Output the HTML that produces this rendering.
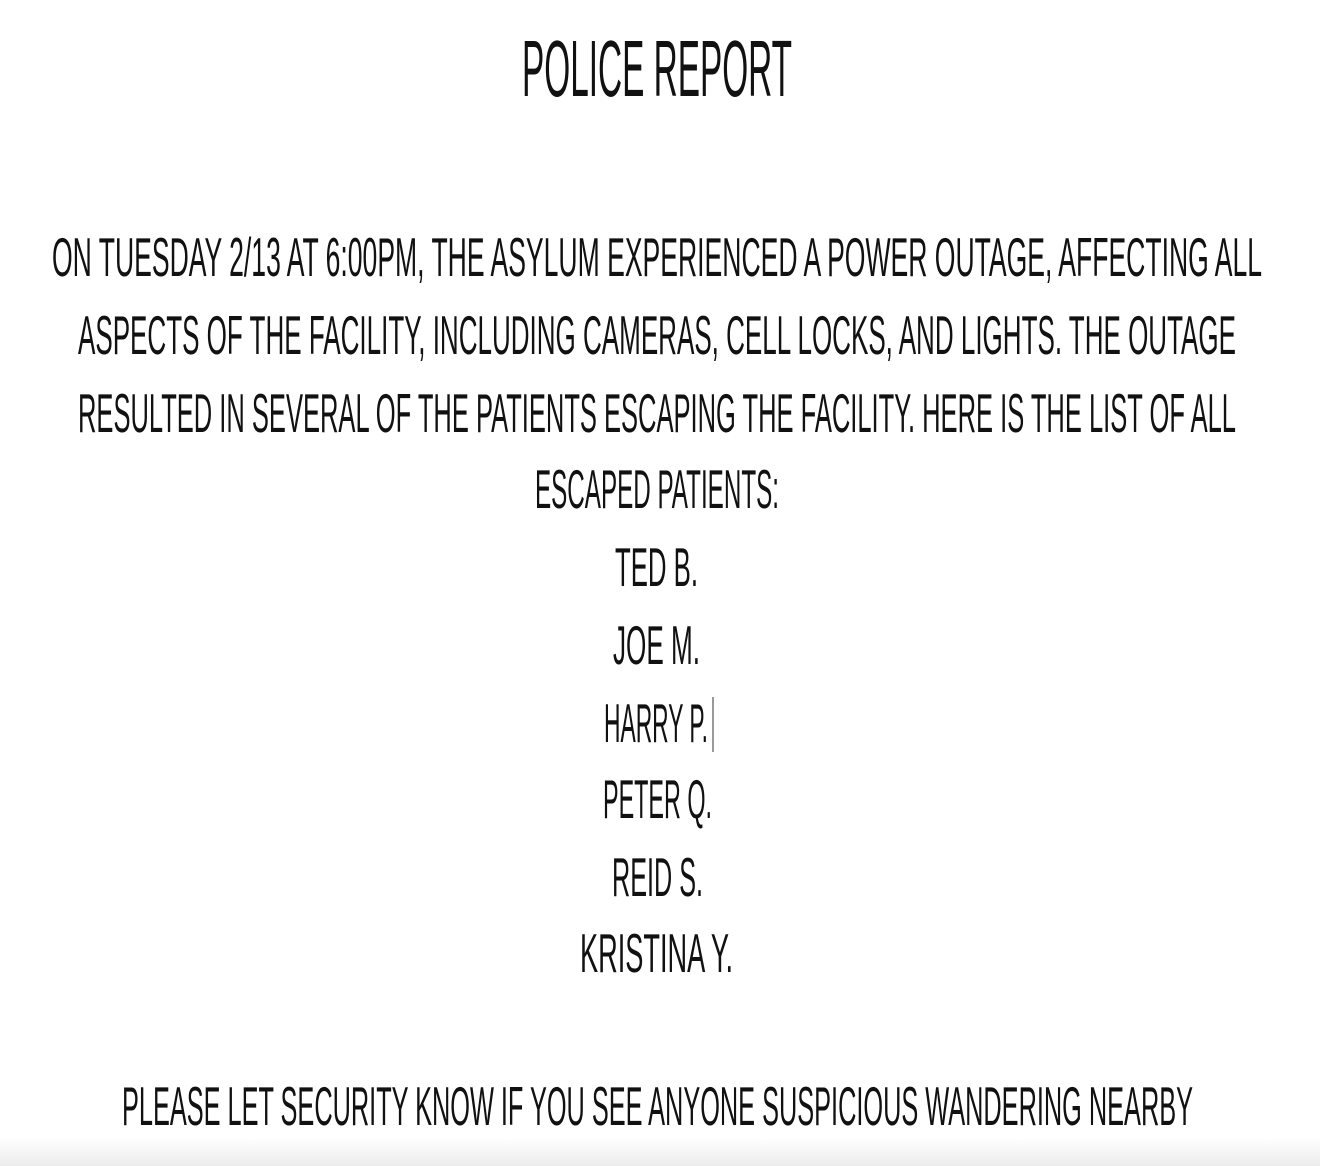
<!DOCTYPE html>
<html><head><meta charset="utf-8"><style>
html,body{margin:0;padding:0;background:#fff;width:1320px;height:1166px;overflow:hidden}
svg{display:block}
text{font-family:"Liberation Sans Narrow","Liberation Sans",sans-serif;fill:#111;text-transform:uppercase}
</style></head><body>
<svg width="1320" height="1166" viewBox="0 0 1320 1166">
<defs><linearGradient id="g" x1="0" y1="0" x2="0" y2="1"><stop offset="0" stop-color="#fff"/><stop offset="1" stop-color="#ececec"/></linearGradient></defs>
<rect x="0" y="1138" width="1320" height="28" fill="url(#g)"/>
<text x="522" y="96" font-size="80" textLength="270" lengthAdjust="spacingAndGlyphs">POLICE REPORT</text>
<g font-size="55">
<text x="52" y="276" textLength="1210" lengthAdjust="spacingAndGlyphs">ON TUESDAY 2/13 AT 6:00PM, THE ASYLUM EXPERIENCED A POWER OUTAGE, AFFECTING ALL</text>
<text x="78" y="354" textLength="1158" lengthAdjust="spacingAndGlyphs">ASPECTS OF THE FACILITY, INCLUDING CAMERAS, CELL LOCKS, AND LIGHTS. THE OUTAGE</text>
<text x="78" y="432" textLength="1158" lengthAdjust="spacingAndGlyphs">RESULTED IN SEVERAL OF THE PATIENTS ESCAPING THE FACILITY. HERE IS THE LIST OF ALL</text>
<text x="535" y="508" textLength="244" lengthAdjust="spacingAndGlyphs">ESCAPED PATIENTS:</text>
<text x="615" y="586" textLength="83" lengthAdjust="spacingAndGlyphs">TED B.</text>
<text x="613" y="664" textLength="87" lengthAdjust="spacingAndGlyphs">JOE M.</text>
<text x="604" y="742" textLength="104" lengthAdjust="spacingAndGlyphs">HARRY P.</text>
<text x="603" y="818" textLength="109" lengthAdjust="spacingAndGlyphs">PETER Q.</text>
<text x="612" y="896" textLength="91" lengthAdjust="spacingAndGlyphs">REID S.</text>
<text x="580" y="972" textLength="153" lengthAdjust="spacingAndGlyphs">KRISTINA Y.</text>
<text x="122" y="1125" textLength="1071" lengthAdjust="spacingAndGlyphs">PLEASE LET SECURITY KNOW IF YOU SEE ANYONE SUSPICIOUS WANDERING NEARBY</text>
</g>
<rect x="712" y="697" width="2" height="55" fill="#999"/>
</svg>
</body></html>
